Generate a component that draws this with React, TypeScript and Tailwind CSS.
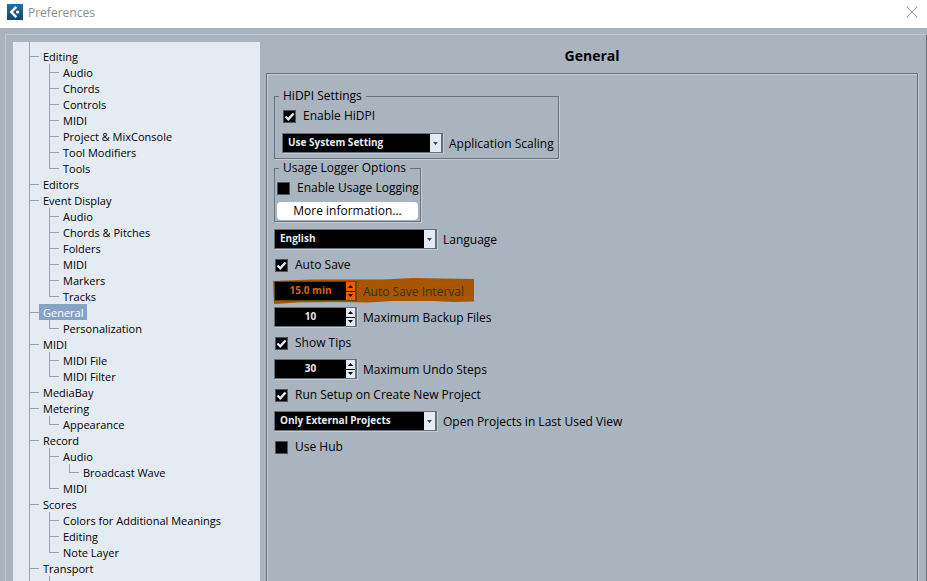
import { Fragment } from 'react';
import type { ReactNode } from 'react';

type TreeNode = {
  label: string;
  selected?: boolean;
  children?: TreeNode[];
};

const pages: TreeNode[] = [
  {
    label: 'Editing',
    children: [
      { label: 'Audio' },
      { label: 'Chords' },
      { label: 'Controls' },
      { label: 'MIDI' },
      { label: 'Project & MixConsole' },
      { label: 'Tool Modifiers' },
      { label: 'Tools' },
    ],
  },
  { label: 'Editors' },
  {
    label: 'Event Display',
    children: [
      { label: 'Audio' },
      { label: 'Chords & Pitches' },
      { label: 'Folders' },
      { label: 'MIDI' },
      { label: 'Markers' },
      { label: 'Tracks' },
    ],
  },
  { label: 'General', selected: true, children: [{ label: 'Personalization' }] },
  { label: 'MIDI', children: [{ label: 'MIDI File' }, { label: 'MIDI Filter' }] },
  { label: 'MediaBay' },
  { label: 'Metering', children: [{ label: 'Appearance' }] },
  {
    label: 'Record',
    children: [
      { label: 'Audio', children: [{ label: 'Broadcast Wave' }] },
      { label: 'MIDI' },
    ],
  },
  {
    label: 'Scores',
    children: [
      { label: 'Colors for Additional Meanings' },
      { label: 'Editing' },
      { label: 'Note Layer' },
    ],
  },
  { label: 'Transport' },
];

// Guide lines are drawn per row, so a branch stops at its last child.
function Tree({ nodes, guides = [] }: { nodes: TreeNode[]; guides?: boolean[] }) {
  return (
    <>
      {nodes.map((node, index) => {
        const isLast = guides.length > 0 && index === nodes.length - 1;
        return (
          <Fragment key={node.label}>
            <li className="flex h-4">
              {guides.map((open, depth) => (
                <span
                  key={depth}
                  className={open ? 'w-5 border-l border-[#98a3b1]' : 'w-5'}
                />
              ))}
              <span className="flex w-2.5 flex-col">
                <span className="h-[9px] border-b border-l border-[#98a3b1]" />
                <span className={isLast ? 'flex-1' : 'flex-1 border-l border-[#98a3b1]'} />
              </span>
              <a
                href="#"
                className={
                  node.selected
                    ? 'bg-[#86a3c3] px-1 leading-[17px] text-white'
                    : 'px-1 leading-[17px]'
                }
              >
                {node.label}
              </a>
            </li>
            {node.children && <Tree nodes={node.children} guides={[...guides, !isLast]} />}
          </Fragment>
        );
      })}
    </>
  );
}

function Check({ label, checked = false }: { label: string; checked?: boolean }) {
  return (
    <label className="flex h-full items-center gap-[7px] pl-px whitespace-nowrap">
      <span className="grid size-[13px] grid-cols-1">
        <input
          type="checkbox"
          defaultChecked={checked}
          className="peer col-start-1 row-start-1 size-[13px] appearance-none border border-[#4b555f] bg-black"
        />
        <svg
          viewBox="0 0 13 13"
          className="pointer-events-none invisible col-start-1 row-start-1 size-[13px] peer-checked:visible"
        >
          <path d="M2.5 6.5 5.3 9.3 10.5 3.5" fill="none" stroke="#e6ecf2" strokeWidth="2.4" />
        </svg>
      </span>
      {label}
    </label>
  );
}

function Choice({ label, value, className }: { label: string; value: string; className: string }) {
  return (
    <label className="flex h-[26px] items-center gap-1.5 whitespace-nowrap">
      <span
        className={`grid h-5 grid-cols-1 border border-r-2 border-[#65707b] bg-black shadow-[1px_1px_0_#c3ccd5] ${className}`}
      >
        <select className="col-start-1 row-start-1 appearance-none pl-[5px] text-[10px] font-bold text-[#e6ecf2]">
          <option>{value}</option>
        </select>
        <span className="pointer-events-none col-start-1 row-start-1 flex w-[11px] items-center justify-center justify-self-end bg-[#e4ebf3]">
          <svg viewBox="0 0 5 3" className="h-[3px] w-[5px]">
            <path d="M0 0H5L2.5 3Z" fill="#3c444c" />
          </svg>
        </span>
      </span>
      <span className="pt-0.5">{label}</span>
    </label>
  );
}

function Stepper({ label, value, marked = false }: { label: string; value: string; marked?: boolean }) {
  const frame = marked
    ? 'border-[#5e4a00]'
    : 'border-[#65707b] shadow-[1px_1px_0_#c3ccd5]';
  const button = marked
    ? 'flex flex-1 items-center justify-center bg-[#f25a00]'
    : 'flex flex-1 items-center justify-center bg-[#e4ebf3]';

  return (
    <label className="relative flex h-[26px] items-center gap-1.5">
      {marked && (
        <svg viewBox="0 0 201 26" className="absolute -left-px top-0 h-[26px] w-[201px]">
          <path
            d="M0 3 40 1.5 110 1.5 140 0 201 1V23.5L180 24 160 23 120 23 95 24.5 60 24 25 24.5 1 26Z"
            fill="#a95500"
          />
        </svg>
      )}
      <span className={`relative flex h-5 w-[83px] border border-r-2 bg-black ${frame}`}>
        <input
          type="text"
          defaultValue={value}
          className={
            marked
              ? 'w-0 flex-1 text-center text-[10px] font-bold text-[#d9620f]'
              : 'w-0 flex-1 text-center text-[10px] font-bold text-[#e6ecf2]'
          }
        />
        <span className="flex w-[9px] flex-col gap-px bg-black">
          <button type="button" aria-label={`Increase ${label}`} className={button}>
            <svg viewBox="0 0 5 3" className="h-[3px] w-[5px]">
              <path d="M0 3H5L2.5 0Z" fill="#000" />
            </svg>
          </button>
          <button type="button" aria-label={`Decrease ${label}`} className={button}>
            <svg viewBox="0 0 5 3" className="h-[3px] w-[5px]">
              <path d="M0 0H5L2.5 3Z" fill="#000" />
            </svg>
          </button>
        </span>
      </span>
      <span className={marked ? 'relative pt-0.5 text-[#2f3800]' : 'pt-0.5'}>{label}</span>
    </label>
  );
}

function Group({ title, className, children }: { title: string; className: string; children: ReactNode }) {
  return (
    <fieldset className={`border border-[#67737f] shadow-[1px_1px_0_#c3ccd5] ${className}`}>
      <legend className="ml-1 bg-[#a9b4bf] px-1 leading-4">{title}</legend>
      {children}
    </fieldset>
  );
}

export default function App() {
  return (
    <div className="flex h-screen flex-col overflow-hidden bg-[#a9b4bf] font-['Open_Sans','Noto_Sans',sans-serif] text-xs text-black">
      <header className="flex h-7 shrink-0 items-center bg-white pr-2 pl-[7px]">
        <svg viewBox="0 0 16 16" className="mb-1 size-4">
          <defs>
            <linearGradient id="logo" x1="0" y1="0" x2="0" y2="1">
              <stop offset="0" stopColor="#2272a3" />
              <stop offset="1" stopColor="#17466c" />
            </linearGradient>
          </defs>
          <rect width="16" height="16" fill="url(#logo)" />
          <path d="M9.3 2.8 4.3 8l5 5.2" fill="none" stroke="#fff" strokeWidth="2.4" />
          <circle cx="10.6" cy="8" r="1.6" fill="#fff" />
        </svg>
        <h1 className="ml-[5px] mb-0.5 text-[#8c8c8c]">Preferences</h1>
        <button type="button" aria-label="Close" className="mb-1 ml-auto">
          <svg viewBox="0 0 14 14" className="size-3.5">
            <path d="M2 2 12 12M12 2 2 12" fill="none" stroke="#8f8f8f" />
          </svg>
        </button>
      </header>

      <div className="mt-1.5 ml-[5px] flex min-h-0 flex-1 border-t border-r border-l border-t-[#c0cad4] border-r-[#67737f] border-l-[#c0cad4] pt-[7px] pr-2 pl-[7px]">
        <nav aria-label="Preference pages" className="w-[247px] shrink-0 overflow-hidden bg-[#e4ebf3] pl-4 text-[11px]">
          <ul>
            <li className="h-1.5 border-l border-[#98a3b1]" />
            <Tree nodes={pages} />
            <li className="h-4 border-l border-[#98a3b1] pl-[19px]">
              <span className="block h-full border-l border-[#98a3b1]" />
            </li>
          </ul>
        </nav>

        <main className="ml-1.5 flex min-w-0 flex-1 flex-col">
          <h2 className="h-[31px] text-center text-sm leading-7 font-bold">General</h2>
          <form className="flex-1 border-t border-r border-l border-[#67737f] px-[7px] pt-3.5 shadow-[1px_0_0_#c3ccd5,inset_1px_1px_0_#c3ccd5]">
            <Group title="HiDPI Settings" className="w-[285px] pb-0.5">
              <div className="flex flex-col gap-0.5 pl-[7px]">
                <div className="h-6">
                  <Check label="Enable HiDPI" checked />
                </div>
                <Choice label="Application Scaling" value="Use System Setting" className="w-[161px]" />
              </div>
            </Group>
            <Group title="Usage Logger Options" className="mt-px w-[147px] pb-px">
              <div className="flex flex-col gap-0.5 px-px">
                <div className="h-6">
                  <Check label="Enable Usage Logging" />
                </div>
                <button type="button" className="mx-px h-[18px] rounded-sm bg-white leading-4">
                  More information...
                </button>
              </div>
            </Group>
            <div className="mt-1 grid auto-rows-[26px]">
              <Choice label="Language" value="English" className="w-[163px]" />
              <Check label="Auto Save" checked />
              <Stepper label="Auto Save Interval" value="15.0 min" marked />
              <Stepper label="Maximum Backup Files" value="10" />
              <Check label="Show Tips" checked />
              <Stepper label="Maximum Undo Steps" value="30" />
              <Check label="Run Setup on Create New Project" checked />
              <Choice
                label="Open Projects in Last Used View"
                value="Only External Projects"
                className="w-[163px]"
              />
              <Check label="Use Hub" />
            </div>
          </form>
        </main>
      </div>
    </div>
  );
}
